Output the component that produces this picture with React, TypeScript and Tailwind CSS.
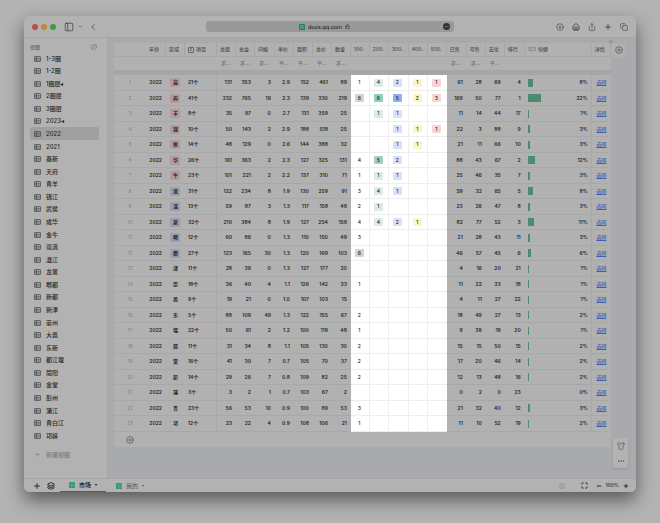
import clsx from 'clsx';
import {
  ChevronDown, ChevronLeft, ChevronsRight, CircleArrowDown, CirclePlus, CircleSlash2, Copy, Ellipsis, House, Layers,
  Lock, Maximize, Minus, PanelLeft, Plus, Share, Shirt, SquareChartGantt,
} from 'lucide-react';

const views = [
  '1-3圈', '1-2圈', '1圈层◂', '2圈层', '3圈层', '2023◂', '2022', '2021', '高新', '天府', '青羊', '锦江', '武侯', '成华', '金牛', '双流',
  '温江', '龙泉', '郫都', '新都', '新津', '崇州', '大邑', '东新', '都江堰', '简阳', '金堂', '彭州', '蒲江', '青白江', '邛崃',
];

type Row = {
  area: string;
  tone?: 'red' | 'blue';
  items: number;
  stats: string[];
  buckets: string[];
  sales: number[];
  share: number;
};

// area, tone, item count | stats | price buckets | sold, available, rate, rank | share
const raw = `高 r 21|131 353 3 2.9 152 461 89|1 4 2 1 1|61 28 69 4|8
府 r 41|332 765 16 2.3 139 330 219|6 6 5 2 3|169 50 77 1|22
羊 r 8|35 97 0 2.7 131 359 25|- 1 1 - -|11 14 44 17|1
锦 r 10|50 143 2 2.9 188 518 25|- - 1 1 1|22 3 88 9|3
侯 r 14|48 129 0 2.6 144 388 32|- - 1 1 -|21 11 66 10|3
华 r 26|161 363 2 2.3 127 325 131|4 5 2 - -|88 43 67 2|12
牛 r 23|101 221 2 2.2 137 310 71|1 1 1 - -|25 46 35 7|3
流 b 31|122 234 8 1.9 130 259 91|3 4 1 - -|59 32 65 5|8
温 b 13|59 87 3 1.3 117 158 49|2 1 - - -|23 26 47 8|3
泉 b 32|210 384 8 1.9 127 254 159|4 4 2 1 -|82 77 52 3|11
郫 b 12|60 86 0 1.3 110 150 49|3 - - - -|21 28 43 11|3
都 b 27|123 165 30 1.3 120 169 103|6 - - - -|46 57 45 6|6
津 n 11|28 39 0 1.3 127 177 20|- - - - -|4 16 20 21|1
崇 n 18|36 40 4 1.1 126 142 33|1 - - - -|11 22 33 18|1
邑 n 9|19 21 0 1.0 107 103 15|- - - - -|4 11 27 22|1
东 n 5|88 109 49 1.3 122 155 67|2 - - - -|18 49 27 13|2
堰 n 22|50 61 2 1.2 100 119 48|1 - - - -|9 39 19 20|1
简 n 11|31 34 8 1.1 105 130 30|2 - - - -|15 15 50 15|2
堂 n 16|41 30 7 0.7 105 70 37|2 - - - -|17 20 46 14|2
彭 n 14|29 26 7 0.8 109 82 25|2 - - - -|12 13 48 16|2
蒲 n 3|3 2 1 0.7 103 67 2|- - - - -|0 2 0 23|0
青 n 23|56 53 10 0.9 100 89 53|3 - - - -|21 32 40 12|3
邛 n 12|23 22 4 0.9 108 106 21|1 - - - -|11 10 52 19|2`;

const rows: Row[] = raw.split('\n').map((line) => {
  const [head, stats, buckets, sales, share] = line.split('|');
  const [area, tone, items] = head.split(' ');
  return {
    area,
    tone: tone === 'r' ? 'red' : tone === 'b' ? 'blue' : undefined,
    items: Number(items),
    stats: stats.split(' '),
    buckets: buckets.split(' '),
    sales: sales.split(' ').map(Number),
    share: Number(share),
  };
});

const widths = [32, 20, 19, 32, 19, 19, 20, 19, 19, 19, 19, 19, 19, 20, 19, 19, 20, 19, 19, 20, 67, 19];
const headers = ['', '年份', '区域', '项目', '总面', '总金', '间幅', '单价', '面积', '总价', '数量', '100.', '200.', '300.', '400.', '500.', '已售', '可售', '去化', '排行', '份额', '详情'];
const summaries = ['', '', '', '', '求…', '求…', '求…', '平…', '平…', '平…', '求…', '', '', '', '', '', '求…', '求…', '平…', '', '', ''];

const bucketColors = ['', 'bg-[#dcebe5]', 'bg-[#dcdff8]', 'bg-[#fbf6c8]', 'bg-[#f8d3d8]'];

function bucketColor(col: number, value: string) {
  if (col === 0) return value === '6' ? 'bg-[#d2d2d2]' : '';
  if (col === 1 && value === '6') return 'bg-[#8fd0b8]';
  if (col === 1 && value === '5') return 'bg-[#a3cfbc]';
  if (col === 2 && value === '5') return 'bg-[#8db2f0]';
  return bucketColors[col];
}

function GridIcon() {
  return (
    <svg viewBox="0 0 14 12" className="w-[7px] h-[6px] shrink-0" fill="none" stroke="#484848" strokeWidth="1.4">
      <rect x="1" y="1" width="12" height="10" rx="1" />
      <path d="M1 4.5h12M1 8h12M5 1v10" />
    </svg>
  );
}

function SheetIcon() {
  return (
    <svg viewBox="0 0 12 12" className="size-[6px] shrink-0">
      <rect width="12" height="12" rx="1" fill="#2e9c73" />
      <path d="M0 4h12M5 4v8M5 8h7" stroke="#6cb397" />
    </svg>
  );
}

function TitleBar() {
  return (
    <header className="flex h-[22px] items-center justify-between border-b border-[#a8a8a8] pl-2 pr-2 text-[#4a4a4a]">
      <div className="flex flex-1 items-center">
        <div className="flex gap-[3px]">
          <span className="size-[6px] rounded-full bg-[#c04a4c]" />
          <span className="size-[6px] rounded-full bg-[#c08a35]" />
          <span className="size-[6px] rounded-full bg-[#429a41]" />
        </div>
        <button aria-label="边栏" className="ml-[8px]"><PanelLeft className="size-[10px]" strokeWidth={2} /></button>
        <button aria-label="标签组" className="ml-[4px]"><ChevronDown className="size-[5px]" strokeWidth={3} /></button>
        <button aria-label="后退" className="ml-[5px]"><ChevronLeft className="size-[10px]" strokeWidth={2} /></button>
      </div>
      <div className="flex h-[11px] w-5/12 items-center rounded-[3px] bg-[#999999] pr-[4px] font-['Liberation_Sans',sans-serif] text-[6px] font-medium text-[#111]">
        <div className="flex flex-1 items-center justify-center gap-[3px]">
          <span className="flex size-[6px] items-center justify-center rounded-[1px] bg-[#217f5a] text-[#9fcfbc]"><SquareChartGantt className="size-[4px]" /></span>
          <span>docs.qq.com</span>
          <Lock className="size-[5px] text-[#444]" strokeWidth={3} />
        </div>
        <button aria-label="更多" className="flex size-[7px] items-center justify-center rounded-full bg-[#333] text-[#999]"><Ellipsis className="size-[5px]" /></button>
      </div>
      <div className="flex flex-1 items-center justify-end gap-[8px]">
        <button aria-label="下载"><CircleArrowDown className="size-[8px]" /></button>
        <button aria-label="主页"><House className="size-[8px]" strokeWidth={3} /></button>
        <button aria-label="共享"><Share className="size-[8px]" /></button>
        <button aria-label="新标签页"><Plus className="size-[8px]" strokeWidth={3} /></button>
        <button aria-label="标签概览"><Copy className="size-[8px]" /></button>
      </div>
    </header>
  );
}

function Sidebar() {
  return (
    <aside className="flex w-[82px] shrink-0 flex-col border-r border-[#bababa] px-[6px] pt-[4px] text-[6px] font-medium text-[#262626]">
      <div className="flex h-[10px] items-center justify-between pr-[2px] text-[5px] text-[#666]">
        <span>视图</span>
        <CircleSlash2 className="size-[6px]" />
      </div>
      <nav>
        {views.map((name, i) => (
          <a
            key={name}
            href={`#${name}`}
            className={clsx(
              'flex items-center gap-[5px] rounded-[2px] pl-[4px]',
              (i % 7) % 2 === 0 ? 'h-[13px]' : 'h-[12px]',
              name === '2022' && 'bg-[#a0a0a0]',
            )}
          >
            <GridIcon />
            {name}
          </a>
        ))}
      </nav>
      <button className="mt-[6px] flex h-[13px] items-center gap-[5px] pl-[4px] text-[#7c7c7c]">
        <Plus className="size-[7px]" />
        新建视图
      </button>
    </aside>
  );
}

function DataRow({ row, index }: { row: Row; index: number }) {
  const line = 'border-b border-[#a8a8a8] p-0';
  const num = clsx(line, 'pr-[4px] text-right');
  return (
    <tr className={index % 2 === 0 ? 'h-[16px]' : 'h-[15px]'}>
      <td className={clsx(line, 'text-center font-normal text-[#858585]')}>{index + 1}</td>
      <td className={num}>2022</td>
      <td className={clsx(line, 'text-center')}>
        <span
          className={clsx(
            'inline-flex h-[9px] w-[10px] items-center justify-center rounded-[1px]',
            row.tone === 'red' && 'bg-[#b5999d]',
            row.tone === 'blue' && 'bg-[#999eb4]',
          )}
        >
          {row.area}
        </span>
      </td>
      <td className={clsx(line, 'border-r pl-[3px] text-left')}>{row.items}个</td>
      {row.stats.map((v, i) => <td key={i} className={num}>{v}</td>)}
      {row.buckets.map((v, i) => (
        <td key={i} className={clsx('border-b border-[#eeeeee] bg-white p-0 pl-[4px] font-medium', i < 4 && 'border-r')}>
          {v !== '-' && (
            <span className={clsx('flex h-[8px] w-[9px] items-center justify-center rounded-[1px]', bucketColor(i, v))}>{v}</span>
          )}
        </td>
      ))}
      {row.sales.map((v, i) => <td key={i} className={num}>{v}</td>)}
      <td className={clsx(line, 'border-r px-[3px]')}>
        <div className="flex items-center justify-between">
          <span className="h-[8px] bg-[#4b8b70]" style={{ width: row.share ? `max(1px, ${row.share}%)` : 0 }} />
          <span>{row.share}%</span>
        </div>
      </td>
      <td className={clsx(line, 'text-center')}>
        <a href="#visit" className="text-[#3f5fb4] underline">访问</a>
      </td>
    </tr>
  );
}

function DataTable() {
  return (
    <table className="w-full table-fixed border-separate border-spacing-0 overflow-hidden text-[5px] font-semibold leading-none whitespace-nowrap text-[#262626]">
      <colgroup>
        {widths.map((w, i) => <col key={i} style={{ width: `${(w / 497) * 100}%` }} />)}
      </colgroup>
      <thead className="bg-[#b1b1b1] text-[#4d4d4d]">
        <tr className="h-[14px]">
          {headers.map((h, i) => (
            <th key={i} scope="col" className={clsx('border-b border-[#a7a7a7] p-0 pl-[3px] text-left font-medium', i > 0 && 'border-r')}>
              {i === 3 && <span className="mr-[2px] inline-flex size-[6px] items-center justify-center rounded-[1px] border border-[#666] text-[4px]">x</span>}
              {i === 20 && <span className="mr-[2px] text-[#777]">123</span>}
              {h}
            </th>
          ))}
        </tr>
        <tr className="h-[13px] font-medium text-[#777]">
          {summaries.map((s, i) => <td key={i} className="p-0 pl-[4px]">{s}</td>)}
        </tr>
      </thead>
      <tbody aria-hidden="true">
        <tr className="h-[5px]"><td colSpan={22} className="bg-[#a5a6aa] p-0" /></tr>
      </tbody>
      <tbody className="bg-[#b1b1b1]">
        {rows.map((row, i) => <DataRow key={row.area} row={row} index={i} />)}
        <tr className="h-[15px]">
          <td className="p-0">
            <button aria-label="添加行" className="flex w-full justify-center text-[#4c4c4c]"><CirclePlus className="size-[8px]" /></button>
          </td>
          <td colSpan={21} className="p-0" />
        </tr>
      </tbody>
    </table>
  );
}

function StatusBar() {
  return (
    <footer className="flex h-[14px] items-center border-t border-[#a6a6a6] text-[6px] text-[#2c2c2c]">
      <button aria-label="新建工作表" className="ml-[9px]"><Plus className="size-[8px]" strokeWidth={3} /></button>
      <button aria-label="全部工作表" className="ml-[6px]"><Layers className="size-[8px]" strokeWidth={3} /></button>
      <button className="ml-[5px] flex h-full w-[46px] items-center justify-center gap-[4px] border-b border-[#4659a8] font-semibold">
        <SheetIcon />市场<span className="text-[4px]">▾</span>
      </button>
      <button className="ml-[10px] flex h-full items-center gap-[4px] text-[#555]">
        <SheetIcon />我的<span className="text-[4px]">▾</span>
      </button>
      <div className="ml-auto flex items-center gap-[4px] pr-[7px]">
        <SquareChartGantt className="mr-[12px] size-[6px] text-[#888]" />
        <button aria-label="全屏" className="mr-[4px]"><Maximize className="size-[7px]" strokeWidth={3} /></button>
        <button aria-label="缩小"><Minus className="size-[6px]" strokeWidth={4} /></button>
        <span className="text-[5px] font-medium">100%</span>
        <button aria-label="放大"><Plus className="size-[6px]" strokeWidth={4} /></button>
      </div>
    </footer>
  );
}

export default function App() {
  return (
    <div className="min-h-screen bg-[#b3b3b3] px-[24px] pt-[16px] pb-[31px] font-['Inter','Noto_Sans_CJK_SC',sans-serif] leading-none">
      <div className="overflow-hidden rounded-[5px] bg-[#b2b2b2] shadow-[0_8px_18px_rgba(0,0,0,0.5)]">
        <TitleBar />
        <div className="flex">
          <Sidebar />
          <main className="flex min-w-0 flex-1 bg-[#a9aaad] pt-[5px] pb-[31px] pl-[8px]">
            <div className="min-w-0 flex-1"><DataTable /></div>
            <div className="relative flex w-[25px] shrink-0 flex-col items-start justify-between">
              <ChevronsRight className="absolute -top-[4px] -left-[3px] size-[6px] text-[#666]" />
              <button aria-label="添加列" className="flex h-[14px] w-[15px] items-center justify-center bg-[#afafb0] text-[#4c4c4c]"><CirclePlus className="size-[8px]" /></button>
              <div className="-mb-[21px] ml-[2px] flex h-[30px] w-[15px] flex-col items-center justify-around rounded-[2px] bg-[#b3b3b3] text-[#555] shadow-sm">
                <button aria-label="外观"><Shirt className="size-[8px]" /></button>
                <button aria-label="更多操作"><Ellipsis className="size-[8px]" /></button>
              </div>
            </div>
          </main>
        </div>
        <StatusBar />
      </div>
    </div>
  );
}
